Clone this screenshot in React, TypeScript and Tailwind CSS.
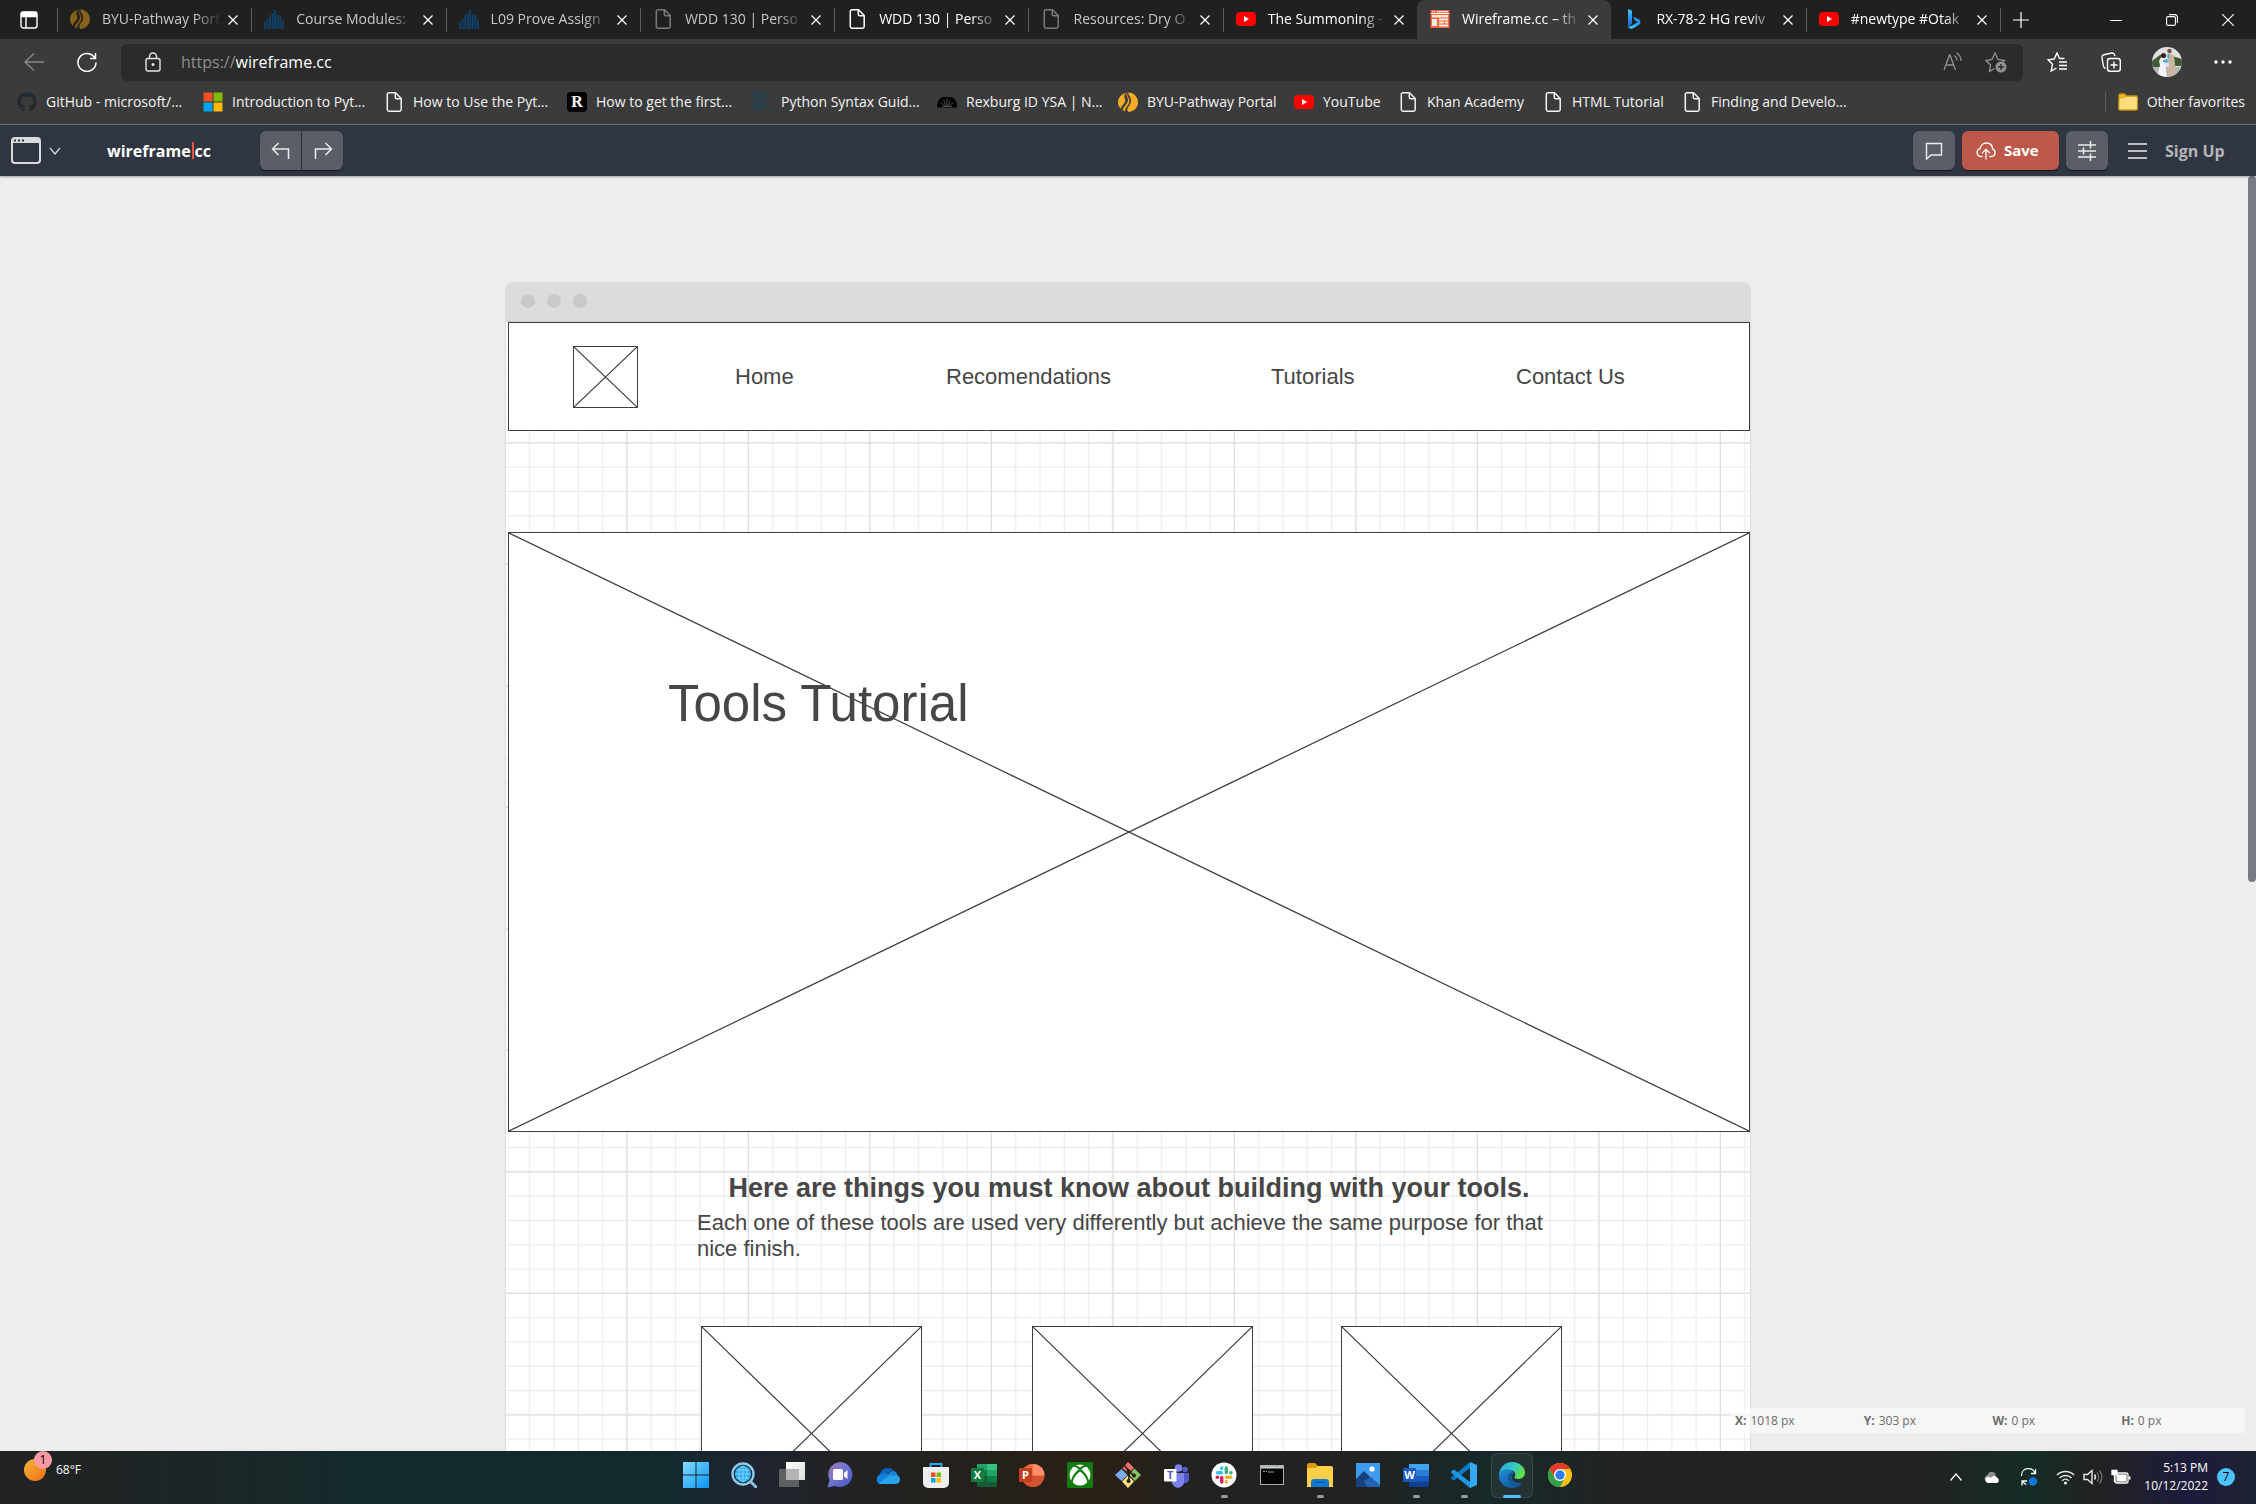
import React from "react";
import { FaGithub } from "react-icons/fa";

type IconProps = { className?: string };

/* ---------- favicons ---------- */

const PageIcon = ({ className = "" }: IconProps) => (
  <svg viewBox="0 0 20 20" className={"size-5 shrink-0 " + className} fill="none" stroke="currentColor" strokeWidth="1.5">
    <path d="M5 .8h6.5L17.200 6.500V17.500a1.700 1.700 0 0 1-1.700 1.700H5a1.700 1.700 0 0 1-1.700-1.700V2.500A1.700 1.700 0 0 1 5 .8Z" />
    <path d="M11.300 1v4.200a1.500 1.500 0 0 0 1.500 1.500H17" />
  </svg>
);

const PathwayIcon = ({ className = "" }: IconProps) => (
  <svg viewBox="0 0 20 20" className={"size-5 shrink-0 " + className} fill="currentColor">
    <path d="M8.500.7C3.500 1.700 0 5.500 0 10.300c0 2.500 1 4.800 2.700 6.500 1-3.800 4.300-5 4.600-8 .2-2.200-1.700-3.200-1-5.200.3-1.200 1.200-2.100 2.200-2.900Z" />
    <path d="M9.600.6C6.200 3.800 10.300 4.600 10 8.300c-.3 3.800-4.300 5.400-5.500 9.800.8.600 1.600 1 2.500 1.300C7.200 15 11.300 13 11.500 9c.1-3.200-3.600-4.800-1.900-8.400Z" opacity=".9" />
    <path d="M10.500.5c-1.200 2.500 2.900 4 2.700 8.500-.2 3.600-4 5.800-3.800 9 0 .8.300 1.300.8 2C16 19.800 20 15.500 20 10.300 20 5 15.800.6 10.500.5Z" />
  </svg>
);

const SpireIcon = () => (
  <svg viewBox="0 0 20 20" className="size-5 shrink-0" stroke="#0f4068" strokeWidth="1.900">
    <path d="M1 20v-7M3.600 20V10M6.200 20V6M8.800 20V4M11.200 20V1M13.800 20V6M16.400 20V6M19 20v-9" />
  </svg>
);

const YouTubeIcon = () => (
  <svg viewBox="0 0 20 20" className="size-5 shrink-0">
    <rect x="0" y="3" width="20" height="14" rx="4" fill="#f00" />
    <path d="M8 7v6l5-3z" fill="#fff" />
  </svg>
);

const WireframeIcon = () => (
  <svg viewBox="0 0 20 20" className="size-5 shrink-0">
    <rect x=".5" y="1" width="19" height="18" fill="#f0673e" />
    <path d="M1 4.500h18" stroke="#fff" strokeWidth="1" />
    <rect x="2" y="6" width="16" height="2.500" fill="#ffe8e0" />
    <rect x="2" y="10" width="5" height="7" fill="#ffe8e0" />
    <path d="M9 10.500h9M9 13.500h5M15 13.500h3M9 16.500h9" stroke="#ffe8e0" strokeWidth="1.800" />
    <path d="M2 2.700h1M4 2.700h1M7 2.700h11" stroke="#fff" strokeWidth="1" />
  </svg>
);

const BingIcon = () => (
  <svg viewBox="0 0 20 20" className="size-5 shrink-0">
    <defs>
      <linearGradient id="bingA" x1="0" y1="0" x2="0" y2="1">
        <stop offset="0" stopColor="#3bc9f5" />
        <stop offset="1" stopColor="#1b5fe0" />
      </linearGradient>
      <linearGradient id="bingB" x1="1" y1="0" x2="0" y2="1">
        <stop offset="0" stopColor="#2b7df0" />
        <stop offset="1" stopColor="#38d0f8" />
      </linearGradient>
    </defs>
    <path d="M4 0l4 1.500v13L4 18z" fill="url(#bingA)" />
    <path d="M9 7.500l2 4 3 1.500-6 3.500L4 18c1.500 2 4 2.200 6 1l5-3.200c2-1.600 2-4.300-.2-5.600z" fill="url(#bingB)" />
  </svg>
);

const MicrosoftIcon = ({ className = "size-5" }: IconProps) => (
  <svg viewBox="0 0 20 20" className={"shrink-0 " + className}>
    <path d="M.5.500h9v9h-9z" fill="#f25022" />
    <path d="M10.500.5h9v9h-9z" fill="#7fba00" />
    <path d="M.5 10.500h9v9h-9z" fill="#00a4ef" />
    <path d="M10.500 10.500h9v9h-9z" fill="#ffb900" />
  </svg>
);

const RIcon = () => (
  <span aria-hidden="true" className="grid size-5 shrink-0 place-items-center rounded-sm bg-black font-['Liberation_Serif',serif] text-base leading-5 font-bold text-white">
    R
  </span>
);

const PythonGuideIcon = () => (
  <svg viewBox="0 0 20 20" className="size-5 shrink-0" fill="none" stroke="#1d4560" strokeWidth="1.500">
    <rect x="1.500" y="2" width="12" height="15" rx="1.500" />
    <path d="M10.500 6h-5v7h5M8 9.500h2.500" />
    <path d="M16 18h1.500M19 18h1" />
  </svg>
);

const RexburgIcon = () => (
  <svg viewBox="0 0 20 20" className="size-5 shrink-0">
    <path d="M0 15.500v-2.500C1 8 4 5 6 5h8c2 0 5 3 6 8v2.500z" fill="#000" />
    <path d="M10 14V7M9 14 6.500 8M11 14l2.500-6M8 14l-4.500-3.500M12 14l4.500-3.500M5 14.500h10" stroke="#4a4a4a" strokeWidth="1" fill="none" />
  </svg>
);

const FolderIcon = () => (
  <svg viewBox="0 0 20 20" className="size-5 shrink-0">
    <path d="M1 5V3.500A1.500 1.500 0 0 1 2.500 2h4L8.500 4H18a1.500 1.500 0 0 1 1.500 1.500v11A1.500 1.500 0 0 1 18 18H2.200A1.500 1.500 0 0 1 .7 16.500z" fill="#ffdc7c" stroke="#c69318" strokeWidth="1.300" />
    <path d="M1.200 5.800V3.500c0-.6.4-1 1-1h4l1.800 1.600-1.800 1.700z" fill="#f3bf12" stroke="#c69318" strokeWidth=".8" />
  </svg>
);

/* ---------- browser tabs ---------- */

type Tab = { title: string; icon: React.ReactNode; dim?: boolean; active?: boolean; noLine?: boolean };

const tabs: Tab[] = [
  { title: "BYU-Pathway Port", icon: <PathwayIcon className="text-[#87601c]" />, dim: true },
  { title: "Course Modules:", icon: <SpireIcon />, dim: true },
  { title: "L09 Prove Assign", icon: <SpireIcon />, dim: true },
  { title: "WDD 130 | Perso", icon: <PageIcon className="text-[#7a7a7a]" />, dim: true },
  { title: "WDD 130 | Perso", icon: <PageIcon className="text-white" /> },
  { title: "Resources: Dry O", icon: <PageIcon className="text-[#7a7a7a]" />, dim: true },
  { title: "The Summoning -", icon: <YouTubeIcon /> },
  { title: "Wireframe.cc – th", icon: <WireframeIcon />, active: true },
  { title: "RX-78-2 HG reviv", icon: <BingIcon />, noLine: true },
  { title: "#newtype #Otak", icon: <YouTubeIcon /> },
];

function TabStrip() {
  return (
    <header className="flex h-[39px] shrink-0 bg-[#202020] text-white">
      <button aria-label="Tab actions" className="grid w-[57px] shrink-0 place-items-center">
        <svg viewBox="0 0 18 18" className="size-[18px]" fill="none" stroke="#fff" strokeWidth="1.400">
          <rect x="1" y="1" width="16" height="16" rx="2.500" />
          <path d="M1.500 1.500h15v4h-15z" fill="#fff" />
          <path d="M6 5v12" />
        </svg>
      </button>
      <div role="tablist" className="flex min-w-0 flex-1">
        {tabs.map((t, i) => (
          <div
            key={i}
            className={
              "flex min-w-0 flex-1 items-center " +
              (t.active ? "rounded-t-lg bg-[#3b3b3b] " : "")
            }
          >
            <span className={"h-6 w-px shrink-0 " + (t.active || t.noLine ? "bg-transparent" : "bg-[#5c5c5c]")} />
            <button role="tab" aria-selected={!!t.active} className="ml-3 flex min-w-0 flex-1 items-center gap-3 pb-px">
              {t.icon}
              <span
                className={
                  "min-w-0 flex-1 text-left text-sm whitespace-nowrap [mask-image:linear-gradient(to_right,black_78%,transparent)] " +
                  (t.dim ? "text-[#c8c8c8]" : "text-white")
                }
              >
                {t.title}
              </span>
            </button>
            <button aria-label="Close tab" className="mr-[10px] ml-1 grid h-6 w-4 shrink-0 place-items-center">
              <svg viewBox="0 0 10 10" className="size-[10px]" stroke="#fff" strokeWidth="1.300">
                <path d="M.5.5l9 9M9.500.5l-9 9" />
              </svg>
            </button>
          </div>
        ))}
      </div>
      <div className="flex w-[256px] shrink-0 items-center">
        <span className="h-6 w-px bg-[#5c5c5c]" />
        <button aria-label="New tab" className="ml-3 grid size-4 place-items-center">
          <svg viewBox="0 0 16 16" className="size-4" stroke="#fff" strokeWidth="1.200">
            <path d="M8 0v16M0 8h16" />
          </svg>
        </button>
        <div className="ml-auto flex">
          <button aria-label="Minimize" className="grid h-9 w-14 place-items-center">
            <svg viewBox="0 0 12 12" className="size-3" stroke="#fff"><path d="M0 6.500h12" /></svg>
          </button>
          <button aria-label="Restore" className="grid h-9 w-14 place-items-center">
            <svg viewBox="0 0 12 12" className="size-3" fill="none" stroke="#fff" strokeWidth="1.100">
              <rect x=".6" y="2.600" width="8.800" height="8.800" rx="1.500" />
              <path d="M3 .6h6a2.400 2.400 0 0 1 2.400 2.400v6" />
            </svg>
          </button>
          <button aria-label="Close window" className="grid h-9 w-14 place-items-center">
            <svg viewBox="0 0 12 12" className="size-3" stroke="#fff" strokeWidth="1.100"><path d="M0 0l12 12M12 0 0 12" /></svg>
          </button>
        </div>
      </div>
    </header>
  );
}

/* ---------- address bar ---------- */

const Avatar = () => (
  <svg viewBox="0 0 30 30" className="size-[30px]">
    <clipPath id="avatarClip"><circle cx="15" cy="15" r="15" /></clipPath>
    <g clipPath="url(#avatarClip)">
      <path d="M0 0h30v30H0z" fill="#dfe0e4" />
      <path d="M0 14l8-6h4l-1 12H0zM20 9l10 3v7H18z" fill="#3f5a35" />
      <path d="M0 20h30v10H0z" fill="#b9b6b3" />
      <path d="M11.500 6c2 0 2.500 2 2.500 4l1 5-2 1 2 14H5l3-12-1-4z" fill="#f3f5fb" />
      <circle cx="11.500" cy="8.500" r="2.600" fill="#3b2320" />
      <path d="M15 8l3-2 4 3 1 8-1 13h-6l1-13z" fill="#c9b69c" />
      <circle cx="17.500" cy="4" r="2.300" fill="#7a5546" />
      <path d="M11 13l4-1 2 2-2 2-4-1zM15.500 7h2v4h-2z" fill="#4cb2d8" />
    </g>
  </svg>
);

function Toolbar() {
  return (
    <div className="flex h-[47px] shrink-0 items-center bg-[#3b3b3b] pb-[1px] text-white">
      <button aria-label="Back" className="ml-6 grid size-5 place-items-center">
        <svg viewBox="0 0 20 20" className="size-5" fill="none" stroke="#8b8b8b" strokeWidth="1.300"><path d="M20 10H1M10 1.500 1 10l9 8.500" /></svg>
      </button>
      <button aria-label="Refresh" className="ml-[33px] grid size-5 place-items-center">
        <svg viewBox="0 0 20 20" className="size-5" fill="none" stroke="#fff" strokeWidth="1.500">
          <path d="M19 10.500A9 9 0 1 1 16.800 4.500L18 6M18.500 1v5.500H13" />
        </svg>
      </button>
      <div className="ml-6 flex h-[37px] min-w-0 flex-1 items-center rounded-md bg-[#2b2b2b]">
        <button aria-label="Site information" className="ml-6 grid size-4">
          <svg viewBox="0 0 16 20" className="-my-0.5 h-5 w-4" fill="none" stroke="#e6e6e6" strokeWidth="1.400">
            <rect x="1" y="6.500" width="14" height="12.500" rx="2" />
            <path d="M4.500 6.500V4.500a3.500 3.500 0 0 1 7 0v2" />
            <circle cx="8" cy="12.500" r=".8" fill="#fff" />
          </svg>
        </button>
        <label className="ml-5 flex min-w-0 flex-1 text-base leading-5">
          <span className="text-[#8f8f8f]">https://</span>
          <input aria-label="Address" defaultValue="wireframe.cc" className="min-w-0 flex-1 bg-transparent text-white outline-none" />
        </label>
        <button aria-label="Read aloud" className="grid size-5 place-items-center">
          <svg viewBox="0 0 20 20" className="size-5" fill="none" stroke="#919191" strokeWidth="1.300">
            <path d="M1 18 6.500 3h.5L12.500 18M3 13h7.500M11.500 3.500a7 7 0 0 1 2.500 5M13.500.8A10 10 0 0 1 18 9" />
          </svg>
        </button>
        <button aria-label="Add to favorites" className="mr-4 ml-[22px] grid size-[22px] place-items-center">
          <svg viewBox="0 0 22 22" className="size-[22px]" fill="none" stroke="#919191" strokeWidth="1.300">
            <path d="M9.500 17.500 4.500 20.500l1-6.500L1 9.500l6-1L10 2l3 6.500 6.500 1L17 12" />
            <circle cx="16" cy="16" r="5.500" fill="#919191" stroke="none" />
            <path d="M16 13v6M13 16h6" stroke="#2b2b2b" strokeWidth="1.400" />
          </svg>
        </button>
      </div>
      <button aria-label="Favorites" className="ml-6 grid size-5 place-items-center">
        <svg viewBox="0 0 20 20" className="size-5" fill="none" stroke="#fff" strokeWidth="1.400">
          <path d="M12.500 6.500 10 1 7.200 7 1 7.800l4.500 4.500L4.200 19l5.300-3M12 10h8M12 13.500h8M12 17h8M12.500 6.500h5" />
        </svg>
      </button>
      <button aria-label="Collections" className="ml-[34px] grid size-5 place-items-center">
        <svg viewBox="0 0 20 20" className="size-5" fill="none" stroke="#fff" strokeWidth="1.400">
          <rect x="6.500" y="6.500" width="12.800" height="12.800" rx="2.500" />
          <path d="M13 9.500v7M9.500 13h7M4.500 16.500C3 16 2.500 15 2.300 13.500L1 5.500C.8 4 1.500 3 3 2.700L10.500 1c1.500-.3 2.500.3 3 1.800L14 4" />
        </svg>
      </button>
      <button aria-label="Profile" className="ml-[31px] rounded-full"><Avatar /></button>
      <button aria-label="Settings and more" className="mr-6 ml-8 grid h-5 w-[18px] place-items-center">
        <svg viewBox="0 0 18 4" className="h-1 w-[18px]" fill="#fff"><circle cx="2" cy="2" r="1.700" /><circle cx="9" cy="2" r="1.700" /><circle cx="16" cy="2" r="1.700" /></svg>
      </button>
    </div>
  );
}

/* ---------- bookmarks ---------- */

const bookmarks: { title: string; icon: React.ReactNode; width: string }[] = [
  { title: "GitHub - microsoft/...", icon: <FaGithub className="size-5 shrink-0 text-[#24292e]" />, width: "w-[186px]" },
  { title: "Introduction to Pyt...", icon: <MicrosoftIcon />, width: "w-[181px]" },
  { title: "How to Use the Pyt...", icon: <PageIcon />, width: "w-[183px]" },
  { title: "How to get the first...", icon: <RIcon />, width: "w-[185px]" },
  { title: "Python Syntax Guid...", icon: <PythonGuideIcon />, width: "w-[185px]" },
  { title: "Rexburg ID YSA | N...", icon: <RexburgIcon />, width: "w-[181px]" },
  { title: "BYU-Pathway Portal", icon: <PathwayIcon className="text-[#f5ac24]" />, width: "w-[176px]" },
  { title: "YouTube", icon: <YouTubeIcon />, width: "w-[104px]" },
  { title: "Khan Academy", icon: <PageIcon />, width: "w-[145px]" },
  { title: "HTML Tutorial", icon: <PageIcon />, width: "w-[139px]" },
  { title: "Finding and Develo...", icon: <PageIcon />, width: "w-[181px]" },
];

function Bookmarks() {
  return (
    <nav aria-label="Bookmarks" className="flex h-[39px] shrink-0 items-center border-b border-[#707070] bg-[#3b3b3b] pb-1.5 pl-[17px] text-sm text-[#f4f4f4]">
      {bookmarks.map((b) => (
        <a key={b.title} href="#" className={"flex shrink-0 items-center gap-[9px] whitespace-nowrap " + b.width}>
          {b.icon}
          {b.title}
        </a>
      ))}
      <a href="#" className="mr-[11px] ml-auto flex items-center gap-[9px] border-l border-[#5e5e5e] pl-3 whitespace-nowrap">
        <FolderIcon />
        Other favorites
      </a>
    </nav>
  );
}

/* ---------- editor toolbar ---------- */

const toolBtn = "grid h-[39px] place-items-center bg-[#5a5e67] shadow-[0_1px_1px_#15181d]";

function EditorBar() {
  return (
    <div className="relative z-10 flex h-[51px] shrink-0 items-center bg-[#2f3541] shadow-[0_1px_2px_rgba(0,0,0,0.35)]">
      <button aria-label="Choose canvas" className="ml-[11px] flex items-center gap-2">
        <svg viewBox="0 0 30 27" className="h-[27px] w-[30px]">
          <rect x="1" y="1" width="28" height="25" rx="3" fill="none" stroke="#d9dadc" strokeWidth="2" />
          <path d="M1 6V3a2 2 0 0 1 2-2h24a2 2 0 0 1 2 2v3z" fill="#d9dadc" />
          <path d="M3 3.500h2M7 3.500h2M11 3.500h2" stroke="#2f3541" strokeWidth="2" />
        </svg>
        <svg viewBox="0 0 12 8" className="h-2 w-3" fill="none" stroke="#d9dadc" strokeWidth="1.200"><path d="M1 1l5 6 5-6" /></svg>
      </button>
      <a href="#" className="ml-[46px] flex w-[153px] items-center text-base leading-5 font-bold text-white">
        wireframe<span className="mx-px h-[17px] w-[2px] bg-[#e8553a]" />cc
      </a>
      <div className="flex gap-px">
        <button aria-label="Undo" className={toolBtn + " w-[41px] rounded-l-md"}>
          <svg viewBox="0 0 20 18" className="h-[18px] w-5" fill="none" stroke="#eceded" strokeWidth="1.500"><path d="M7.500 1 1.500 7l6 6M2 7h15.500v10" /></svg>
        </button>
        <button aria-label="Redo" className={toolBtn + " w-[41px] rounded-r-md"}>
          <svg viewBox="0 0 20 18" className="h-[18px] w-5" fill="none" stroke="#eceded" strokeWidth="1.500"><path d="M12.500 1l6 6-6 6M18 7H2.500v10" /></svg>
        </button>
      </div>
      <div className="mr-7 ml-auto flex items-center">
        <button aria-label="Comments" className={toolBtn + " w-[42px] rounded-md"}>
          <svg viewBox="0 0 18 18" className="size-[18px]" fill="none" stroke="#eceded" strokeWidth="1.400"><path d="M1.500 1.500h15v11.500H6l-4.500 4z" /></svg>
        </button>
        <button className="ml-[7px] flex h-[39px] w-[97px] items-center gap-2 rounded-md bg-[#bd584a] pl-[14px] text-[15px] font-bold text-white shadow-[0_1px_1px_#15181d]">
          <svg viewBox="0 0 20 18" className="h-[18px] w-5" fill="none" stroke="#fff" strokeWidth="1.300">
            <path d="M6.500 14.500H5a4 4 0 0 1-.8-7.900C4.500 3.500 7 1 10.300 1c3.700 0 6 2.600 6.300 5.800 1.500.6 2.400 1.900 2.400 3.700 0 2.300-1.700 4-4 4h-1.500M10 17.500V7.500M6 11.300l4-4 4 4" />
          </svg>
          Save
        </button>
        <button aria-label="Settings" className={toolBtn + " ml-[7px] w-[42px] rounded-md"}>
          <svg viewBox="0 0 18 20" className="h-5 w-[18px]" stroke="#eceded" strokeWidth="1.500"><path d="M0 4h18M0 10h18M0 16h18M12.500 0v7.500M5.500 6.500v7M12.500 12.500V20" /></svg>
        </button>
        <button aria-label="Menu" className="ml-5 grid w-[19px] place-items-center">
          <svg viewBox="0 0 19 16" className="h-4 w-[19px]" stroke="#eceded" strokeWidth="1.500"><path d="M0 1h19M0 8h19M0 15h19" /></svg>
        </button>
        <a href="#" className="ml-[18px] w-[63px] text-base font-bold whitespace-nowrap text-[#b4b6ba]">Sign Up</a>
      </div>
    </div>
  );
}

/* ---------- wireframe canvas ---------- */

function CrossBox({ className = "", children }: { className?: string; children?: React.ReactNode }) {
  return (
    <div className={"relative border border-[#3f3f3f] bg-white " + className}>
      <svg className="absolute inset-0 size-full" viewBox="0 0 100 100" preserveAspectRatio="none" stroke="#3f3f3f" strokeWidth="1.200">
        <path d="M0 0 100 100M100 0 0 100" vectorEffect="non-scaling-stroke" />
      </svg>
      {children}
    </div>
  );
}

const GridPaper = () => (
  <svg className="absolute inset-0 size-full" aria-hidden="true">
    <defs>
      <pattern id="minor" width="24.300" height="24.300" patternUnits="userSpaceOnUse">
        <path d="M23.700 0v24.300M0 23.700h24.300" stroke="#ececec" strokeWidth="1.200" />
      </pattern>
      <pattern id="major" width="121.500" height="121.500" patternUnits="userSpaceOnUse">
        <path d="M120.900 0v121.500M0 120.900h121.500" stroke="#dedede" strokeWidth="1.200" />
      </pattern>
    </defs>
    <rect width="100%" height="100%" fill="url(#minor)" />
    <rect width="100%" height="100%" fill="url(#major)" />
  </svg>
);

function Canvas() {
  return (
    <main className="relative min-h-0 flex-1 overflow-hidden bg-[#ededed] font-['Liberation_Sans',Arial,sans-serif] text-[#464646]">
      <div className="mx-auto mt-[106px] w-full max-w-[1246px]">
        <div className="flex h-10 items-center gap-3 rounded-t-lg bg-[#dcdcdc] pb-0.5 pl-4">
          <span className="size-[14px] rounded-full bg-[#c9c9c9]" />
          <span className="size-[14px] rounded-full bg-[#c9c9c9]" />
          <span className="size-[14px] rounded-full bg-[#c9c9c9]" />
        </div>
        <div className="relative mx-px h-[1300px] bg-white shadow-[0_0_2px_rgba(0,0,0,0.2)]">
          <GridPaper />
          <div className="relative pl-[2px]">
            <nav aria-label="Wireframe" className="flex h-[109px] items-center border border-[#3f3f3f] bg-white pl-16 text-[22px] leading-7">
              <CrossBox className="mr-[97px] h-[62px] w-[65px]" />
              <a href="#" className="w-[211px]">Home</a>
              <a href="#" className="w-[325px]">Recomendations</a>
              <a href="#" className="w-[245px]">Tutorials</a>
              <a href="#">Contact Us</a>
            </nav>
            <CrossBox className="mt-[101px] h-[600px] pt-[141px] pl-[159px]">
              <h1 className="relative text-[51px] leading-[60px]">Tools Tutorial</h1>
            </CrossBox>
            <section className="px-[189px] pt-[38px]">
              <h2 className="mb-1 text-center text-[27px] leading-9 font-bold">Here are things you must know about building with your tools.</h2>
              <p className="text-[22px] leading-[26px]">
                Each one of these tools are used very differently but achieve the same purpose for that
                <br />
                nice finish.
              </p>
            </section>
            <div className="mt-16 ml-[193px] flex">
              <CrossBox className="h-[215px] w-[221px]" />
              <CrossBox className="ml-[110px] h-[215px] w-[221px]" />
              <CrossBox className="ml-[88px] h-[215px] w-[221px]" />
            </div>
          </div>
        </div>
      </div>
      <div className="absolute top-0 right-0 h-[706px] w-[8px] rounded-full bg-[#787b82]" />
      <dl className="absolute right-[11px] bottom-[18px] grid h-[25px] w-[515px] grid-cols-4 items-center bg-white/50 font-['Open_Sans',sans-serif] text-xs text-[#6c6c6c]">
        {[["X:", "1018 px"], ["Y:", "303 px"], ["W:", "0 px"], ["H:", "0 px"]].map(([k, v]) => (
          <div key={k} className="flex gap-1 pl-[5px]">
            <dt className="font-bold">{k}</dt>
            <dd>{v}</dd>
          </div>
        ))}
      </dl>
    </main>
  );
}

/* ---------- taskbar ---------- */

const box = "size-[26px]";
const V = "0 0 26 26";

const Start = () => (
  <svg viewBox={V} className={box}>
    <defs><linearGradient id="win" x1="0" y1="0" x2="1" y2="1"><stop offset="0" stopColor="#7fdcff" /><stop offset="1" stopColor="#0a94f5" /></linearGradient></defs>
    <path d="M0 0h12.500v12.500H0zM13.500 0H26v12.500H13.500zM0 13.500h12.500V26H0zM13.500 13.500H26V26H13.500z" fill="url(#win)" />
  </svg>
);
const Search = () => (
  <svg viewBox={V} className={box}>
    <path d="M19 19l6 6" stroke="#8fc3dd" strokeWidth="3" strokeLinecap="round" />
    <circle cx="12" cy="12" r="10.500" fill="#10333f" stroke="#8fc9e4" strokeWidth="2.400" />
    <circle cx="12" cy="12" r="8" fill="#2fa8ea" />
    <path d="M4 12h16M12 4v16M5.500 8h13M5.500 16h13" stroke="#8fe0ff" strokeWidth=".8" />
    <ellipse cx="12" cy="12" rx="4" ry="8" fill="none" stroke="#8fe0ff" strokeWidth=".8" />
  </svg>
);
const TaskView = () => (
  <svg viewBox={V} className={box}>
    <defs><linearGradient id="tv" x1="0" y1="0" x2="1" y2="1"><stop offset="0" stopColor="#fff" /><stop offset="1" stopColor="#dcdcdc" /></linearGradient></defs>
    <path d="M7 0h19v18H7z" fill="url(#tv)" />
    <path d="M0 7h20v18H0z" fill="#6b6b6b" opacity=".85" />
    <path d="M7 7h13v11H7z" fill="#b4b4b4" />
  </svg>
);
const Chat = () => (
  <svg viewBox={V} className={box}>
    <defs><linearGradient id="chat" x1="0" y1="0" x2="1" y2="1"><stop offset="0" stopColor="#b070a8" /><stop offset=".4" stopColor="#7478cf" /><stop offset="1" stopColor="#4a52c4" /></linearGradient></defs>
    <path d="M13.500 0A12.500 12.500 0 1 1 8 24l-7.500 1.500L2.500 18A12.500 12.500 0 0 1 13.500 0z" fill="url(#chat)" />
    <rect x="6" y="7" width="10" height="11" rx="1.500" fill="#fff" />
    <path d="M17 11l3.500-3v9L17 14.500z" fill="#fff" />
  </svg>
);
const OneDrive = () => (
  <svg viewBox={V} className={box}>
    <path d="M5 12a8 8 0 0 1 14-3c-4 0-10 3-13 9z" fill="#0c64bd" />
    <path d="M7 12a5.500 5.500 0 0 0-3 10l11-9c-3-2-6-2-8-1z" fill="#0f7fdb" />
    <path d="M3.500 21.500 13 14c5-3.500 12-1.500 12 3.500a5 5 0 0 1-5 4.500H5z" fill="#26a4ea" />
    <path d="M13 12c4-5 9-3 9.500 1.500-3 0-5 0-9.500 0z" fill="#1583da" />
  </svg>
);
const Store = () => (
  <svg viewBox={V} className={box}>
    <path d="M7.500 6V2h11v4" fill="none" stroke="#29a9ea" strokeWidth="2" />
    <path d="M0 5h26v16a5 5 0 0 1-5 5H5a5 5 0 0 1-5-5z" fill="#eee" />
    <path d="M8 10.500h4.500V15H8z" fill="#f04e23" /><path d="M13.500 10.500H18V15h-4.500z" fill="#7eb900" />
    <path d="M8 16h4.500v4.500H8z" fill="#00a3ee" /><path d="M13.500 16H18v4.500h-4.500z" fill="#ffb800" />
  </svg>
);
const Letter = ({ children, x = 6.500 }: { children: string; x?: number }) => (
  <text x={x} y="17" textAnchor="middle" fontSize="11" fontWeight="700" fill="#fff">{children}</text>
);
const Excel = () => (
  <svg viewBox={V} className={box}>
    <path d="M6 2h10v6H6z" fill="#21a366" /><path d="M16 2h10v6H16z" fill="#33c481" />
    <path d="M6 8h10v6H6z" fill="#107c41" /><path d="M16 8h10v6H16z" fill="#21a366" />
    <path d="M6 14h20v11H6z" fill="#185c37" /><path d="M16 14h10v6H16z" fill="#107c41" />
    <rect x="0" y="6" width="13" height="14" rx="1" fill="#107c41" /><Letter>X</Letter>
  </svg>
);
const PowerPoint = () => (
  <svg viewBox={V} className={box}>
    <circle cx="14" cy="13.500" r="11.500" fill="#d35230" />
    <path d="M14 2a11.500 11.500 0 0 1 11.500 11.500H14z" fill="#ff8f6b" /><path d="M14 2a11.500 11.500 0 0 0-11.500 11.500H14z" fill="#ed6c47" />
    <rect x="0" y="6" width="13" height="14" rx="1" fill="#c43e1c" /><Letter>P</Letter>
  </svg>
);
const Xbox = () => (
  <svg viewBox={V} className={box}>
    <rect width="26" height="26" rx="1.500" fill="#107c10" />
    <circle cx="13" cy="13" r="10.500" fill="#fff" />
    <path d="M13 7C9 3.500 7 3.500 6 4M13 7c4-3.500 6-3.500 7-3" stroke="#107c10" strokeWidth="2.200" fill="none" />
    <path d="M13 9.500c3.500 2.500 8 8 6.800 12L22 19C21 14 17 9 13 6.500 9 9 5 14 4 19l2.200 2.500C5 17.500 9.500 12 13 9.500z" fill="#107c10" />
  </svg>
);
const Git = () => (
  <svg viewBox={V} className={box}>
    <path d="M13 0l6 6-5.500 5.500L7.500 6z" fill="#f0716f" /><path d="M19.500 6.500 26 13l-6 6-6-6z" fill="#83c564" />
    <path d="M6.500 7 12.500 13l-6 6L0 13z" fill="#7aacf5" /><path d="M13 13.500l6 6L13 26l-6-6.500z" fill="#ffe07a" />
    <path d="M9 3l5 6v12M14 9l5 5" stroke="#2a1b14" strokeWidth="1.600" fill="none" />
    <circle cx="13.500" cy="9" r="2" fill="#2a1b14" /><circle cx="19" cy="13.500" r="2" fill="#2a1b14" /><circle cx="13.500" cy="19" r="2" fill="#2a1b14" />
  </svg>
);
const Teams = () => (
  <svg viewBox={V} className={box}>
    <circle cx="22" cy="7.500" r="2.800" fill="#5059c9" /><path d="M18 11h8v6a4 4 0 0 1-8 0z" fill="#5059c9" />
    <circle cx="15.500" cy="6" r="3.800" fill="#7b83eb" /><path d="M9 11h12v7a6 6 0 0 1-12 3z" fill="#7b83eb" />
    <rect x="1" y="7" width="12.500" height="12.500" rx="1" fill="#fff" />
    <text x="7.200" y="17" textAnchor="middle" fontSize="11" fontWeight="700" fill="#5059c9">T</text>
  </svg>
);
const Slack = () => (
  <svg viewBox={V} className={box}>
    <circle cx="13" cy="13" r="12.500" fill="#fff" />
    <g strokeWidth="3.400" strokeLinecap="round">
      <path d="M6.500 10.700h4" stroke="#36c5f0" /><path d="M10.700 6v.5" stroke="#36c5f0" />
      <path d="M15.300 6v4.500" stroke="#2eb67d" /><path d="M19.800 10.700h.2" stroke="#2eb67d" />
      <path d="M15.500 15.300h4.200" stroke="#ecb22e" /><path d="M15.300 19.800v.2" stroke="#ecb22e" />
      <path d="M10.700 15.500v4.500" stroke="#e01e5a" /><path d="M6.200 15.300h.3" stroke="#e01e5a" />
    </g>
  </svg>
);
const Terminal = () => (
  <svg viewBox={V} className={box}>
    <rect x="1.500" y="3.500" width="23" height="19" fill="#050505" stroke="#a9b0b4" strokeWidth="1" />
    <path d="M2 5.300h22" stroke="#c9ced1" strokeWidth="2.400" />
    <path d="M4 9.500h2M7 9.500h1M9 10h6" stroke="#999" strokeWidth="1.200" />
  </svg>
);
const Explorer = () => (
  <svg viewBox={V} className={box}>
    <path d="M0 3a2 2 0 0 1 2-2h6l3 3v5H0z" fill="#d99a0b" />
    <path d="M0 6h9l2-2h13a2 2 0 0 1 2 2v19H0z" fill="#ffcf48" />
    <path d="M4 25v-5a3 3 0 0 1 3-3h12a3 3 0 0 1 3 3v5z" fill="#1379cf" /><path d="M8 20h10" stroke="#0a5ba6" strokeWidth="1.500" />
  </svg>
);
const Photos = () => (
  <svg viewBox={V} className={box}>
    <rect x="1" y="1" width="24" height="24" fill="#3f9cec" />
    <path d="M1 25V17l8-8 16 16z" fill="#16417f" /><path d="M12 25l-3-6 7-4 9 8v2z" fill="#2460b4" />
    <circle cx="17" cy="7" r="2.600" fill="#fff" />
  </svg>
);
const Word = () => (
  <svg viewBox={V} className={box}>
    <path d="M6 2h20v6H6z" fill="#41a5ee" /><path d="M6 8h20v6H6z" fill="#2b7cd3" /><path d="M6 14h20v6H6z" fill="#185abd" /><path d="M6 19.500h20V25H6z" fill="#103f91" />
    <rect x="0" y="6" width="13" height="14" rx="1" fill="#185abd" /><Letter>W</Letter>
  </svg>
);
const VSCode = () => (
  <svg viewBox={V} className={box}>
    <path d="M19 6 3 18.500 0 16.500 0 15.500 19 0z" fill="#0b7ac4" />
    <path d="M19 20 3 7.500 0 9.500v1L19 26z" fill="#2196e3" />
    <path d="M19 0l7 3v20l-7 3z" fill="#35a9f0" />
  </svg>
);
const Edge = () => (
  <svg viewBox={V} className={box}>
    <defs>
      <linearGradient id="edgeTop" x1="0" y1="0" x2="1" y2=".4"><stop offset="0" stopColor="#2aa5e0" /><stop offset=".6" stopColor="#37c6c6" /><stop offset="1" stopColor="#5fe04d" /></linearGradient>
      <linearGradient id="edgeLow" x1="0" y1="0" x2="1" y2="1"><stop offset="0" stopColor="#1b8fdd" /><stop offset="1" stopColor="#114a8b" /></linearGradient>
    </defs>
    <path d="M13 0c8 0 13 5.500 13 10.500 0 4-3 6.500-6.500 6.500-3 0-4.500-1-4-2 1.500-2 1-6-3-6.500C7 8 2 10 0 14 0 6 5.500 0 13 0z" fill="url(#edgeTop)" />
    <path d="M0 14C1 8.500 6 6.500 10 7.500c3 .8 5 3 4.800 4.500C12 10 9 12.500 9.500 17c.5 4 4 6.500 8 6 2.500-.3 4.500-1.200 6-2.500C21 24.500 17 26 13 26 6 26 0 21 0 14z" fill="url(#edgeLow)" />
    <path d="M9.500 17c.5 4.500 5 7 9 6 2.500-.5 5-2.500 5-3-5 2-10 0-10.500-4-.2-1.500.5-3 1.500-4-3-.5-5.300 1.500-5 5z" fill="#0f5a9e" />
  </svg>
);
const Chrome = () => (
  <svg viewBox={V} className={box}>
    <circle cx="13" cy="13" r="12" fill="#fbc116" />
    <path d="M2.600 7A12 12 0 0 1 23.400 7H13a6 6 0 0 0-5.200 9z" fill="#e33b2e" />
    <path d="M2.600 7A12 12 0 0 0 13 25l5.200-9a6 6 0 0 1-10.400 0z" fill="#31a350" />
    <circle cx="13" cy="13" r="6" fill="#fff" /><circle cx="13" cy="13" r="4.700" fill="#2f7cf0" />
  </svg>
);

const apps: { name: string; icon: React.ReactNode; state?: "open" | "active" }[] = [
  { name: "Start", icon: <Start /> },
  { name: "Search", icon: <Search /> },
  { name: "Task view", icon: <TaskView /> },
  { name: "Chat", icon: <Chat /> },
  { name: "OneDrive", icon: <OneDrive /> },
  { name: "Microsoft Store", icon: <Store /> },
  { name: "Excel", icon: <Excel /> },
  { name: "PowerPoint", icon: <PowerPoint /> },
  { name: "Xbox", icon: <Xbox /> },
  { name: "Git", icon: <Git /> },
  { name: "Teams", icon: <Teams /> },
  { name: "Slack", icon: <Slack />, state: "open" },
  { name: "Terminal", icon: <Terminal /> },
  { name: "File Explorer", icon: <Explorer />, state: "open" },
  { name: "Photos", icon: <Photos /> },
  { name: "Word", icon: <Word />, state: "open" },
  { name: "Visual Studio Code", icon: <VSCode />, state: "open" },
  { name: "Edge", icon: <Edge />, state: "active" },
  { name: "Chrome", icon: <Chrome /> },
];

function Taskbar() {
  return (
    <footer className="grid h-[53px] shrink-0 grid-cols-[1fr_auto_1fr] items-center bg-[linear-gradient(to_right,#222222_0%,#1b2627_10%,#112b2c_18%,#112b2d_29%,#1e2430_33%,#222222_38%,#252019_45%,#2a2015_49%,#222222_53%,#222222_60%,#17292a_66%,#222222_72%,#222222_85%,#152c27_90%,#222222_93%,#1c1c3c_97%,#1d2230_100%)] text-white">
      <button className="ml-6 flex items-center gap-[10px] justify-self-start pb-4 text-xs">
        <span className="relative size-[22px] rounded-full bg-linear-to-br from-[#f0b63a] to-[#f06a0c]">
          <span className="absolute -top-2 left-[10px] grid size-[18px] place-items-center rounded-full bg-[#ff99a4] text-xs text-black">1</span>
        </span>
        68°F
      </button>
      <div className="flex">
        {apps.map((a) => (
          <button key={a.name} aria-label={a.name} className="relative grid h-[53px] w-12 place-items-center pb-1">
            <span className={"grid h-[45px] w-[42px] place-items-center rounded-md pb-px " + (a.state === "active" ? "border border-white/10 bg-white/5" : "")}>
              {a.icon}
            </span>
            {a.state === "open" && <span className="absolute bottom-[6px] left-[21px] h-[3px] w-[7px] rounded-full bg-[#9a9a9a]" />}
            {a.state === "active" && <span className="absolute bottom-[6px] left-[15px] h-[3px] w-[18px] rounded-full bg-[#4cc2ff]" />}
          </button>
        ))}
      </div>
      <div className="mr-[21px] flex items-center justify-self-end pb-px">
        <button aria-label="Hidden icons" className="mr-[22px]">
          <svg viewBox="0 0 12 8" className="h-2 w-3" fill="none" stroke="#fff" strokeWidth="1.300"><path d="M.5 7.500 6 1l5.500 6.500" /></svg>
        </button>
        <button aria-label="OneDrive status" className="mr-5">
          <svg viewBox="0 0 16 12" className="h-3 w-4"><path d="M1 9a3.500 3.500 0 0 1 2.500-5A4.500 4.500 0 0 1 12 3.500L8 9z" fill="#8d8d8d" /><path d="M4 12a3 3 0 0 1-2-5c2-2 4-1 5 0 1-2 4.500-3 6.500 0A2.800 2.800 0 0 1 13 12z" fill="#fff" /></svg>
        </button>
        <button aria-label="Updates" className="mr-[18px]">
          <svg viewBox="0 0 18 18" className="size-[18px]" fill="none" stroke="#fff" strokeWidth="1.300">
            <path d="M1.500 8A7 7 0 0 1 15 5M15.500 1v4.500H11M6.500 16.500A7 7 0 0 1 2.500 13M7 13H2v4.500" />
            <circle cx="13" cy="13.500" r="4.200" fill="#0a78d6" stroke="none" />
          </svg>
        </button>
        <button aria-label="Network, volume and battery" className="mr-[13px] flex items-center gap-2">
          <svg viewBox="0 0 19 16" className="h-4 w-[19px]" fill="none" stroke="#e8e8e8" strokeWidth="1.500">
            <path d="M1 6a12 12 0 0 1 17 0M3.500 9a8.500 8.500 0 0 1 12 0M6.200 11.700a4.700 4.700 0 0 1 6.600 0" /><circle cx="9.500" cy="14" r="1.500" fill="#fff" stroke="none" />
          </svg>
          <svg viewBox="0 0 20 16" className="h-4 w-5" fill="none" stroke="#e8e8e8" strokeWidth="1.400">
            <path d="M1 5.500h3.500L9 1.500v13l-4.500-4H1z" /><path d="M11.500 5.500a4 4 0 0 1 0 5" /><path d="M14 3.500a7 7 0 0 1 0 9M16.500 1.500a10 10 0 0 1 0 13" stroke="#6c6c6c" />
          </svg>
          <svg viewBox="0 0 20 16" className="h-4 w-5" fill="none" stroke="#fff" strokeWidth="1.300">
            <rect x="4" y="4" width="13" height="10" rx="2" /><rect x="6" y="6" width="9" height="6" fill="#fff" /><path d="M18.500 7.500v3" strokeWidth="2" /><path d="M1 1.500h5v4H1zM3.500 5v8" fill="#fff" />
          </svg>
        </button>
        <button className="mr-[9px] text-right text-xs leading-[18px]">
          5:13 PM<br />10/12/2022
        </button>
        <button aria-label="Notifications" className="grid size-[18px] place-items-center rounded-full bg-[#4cc2ff] text-xs text-black">7</button>
      </div>
    </footer>
  );
}

export default function App() {
  return (
    <div className="flex h-screen flex-col overflow-hidden font-['Open_Sans','Noto_Sans',sans-serif]">
      <TabStrip />
      <Toolbar />
      <Bookmarks />
      <EditorBar />
      <Canvas />
      <Taskbar />
    </div>
  );
}
